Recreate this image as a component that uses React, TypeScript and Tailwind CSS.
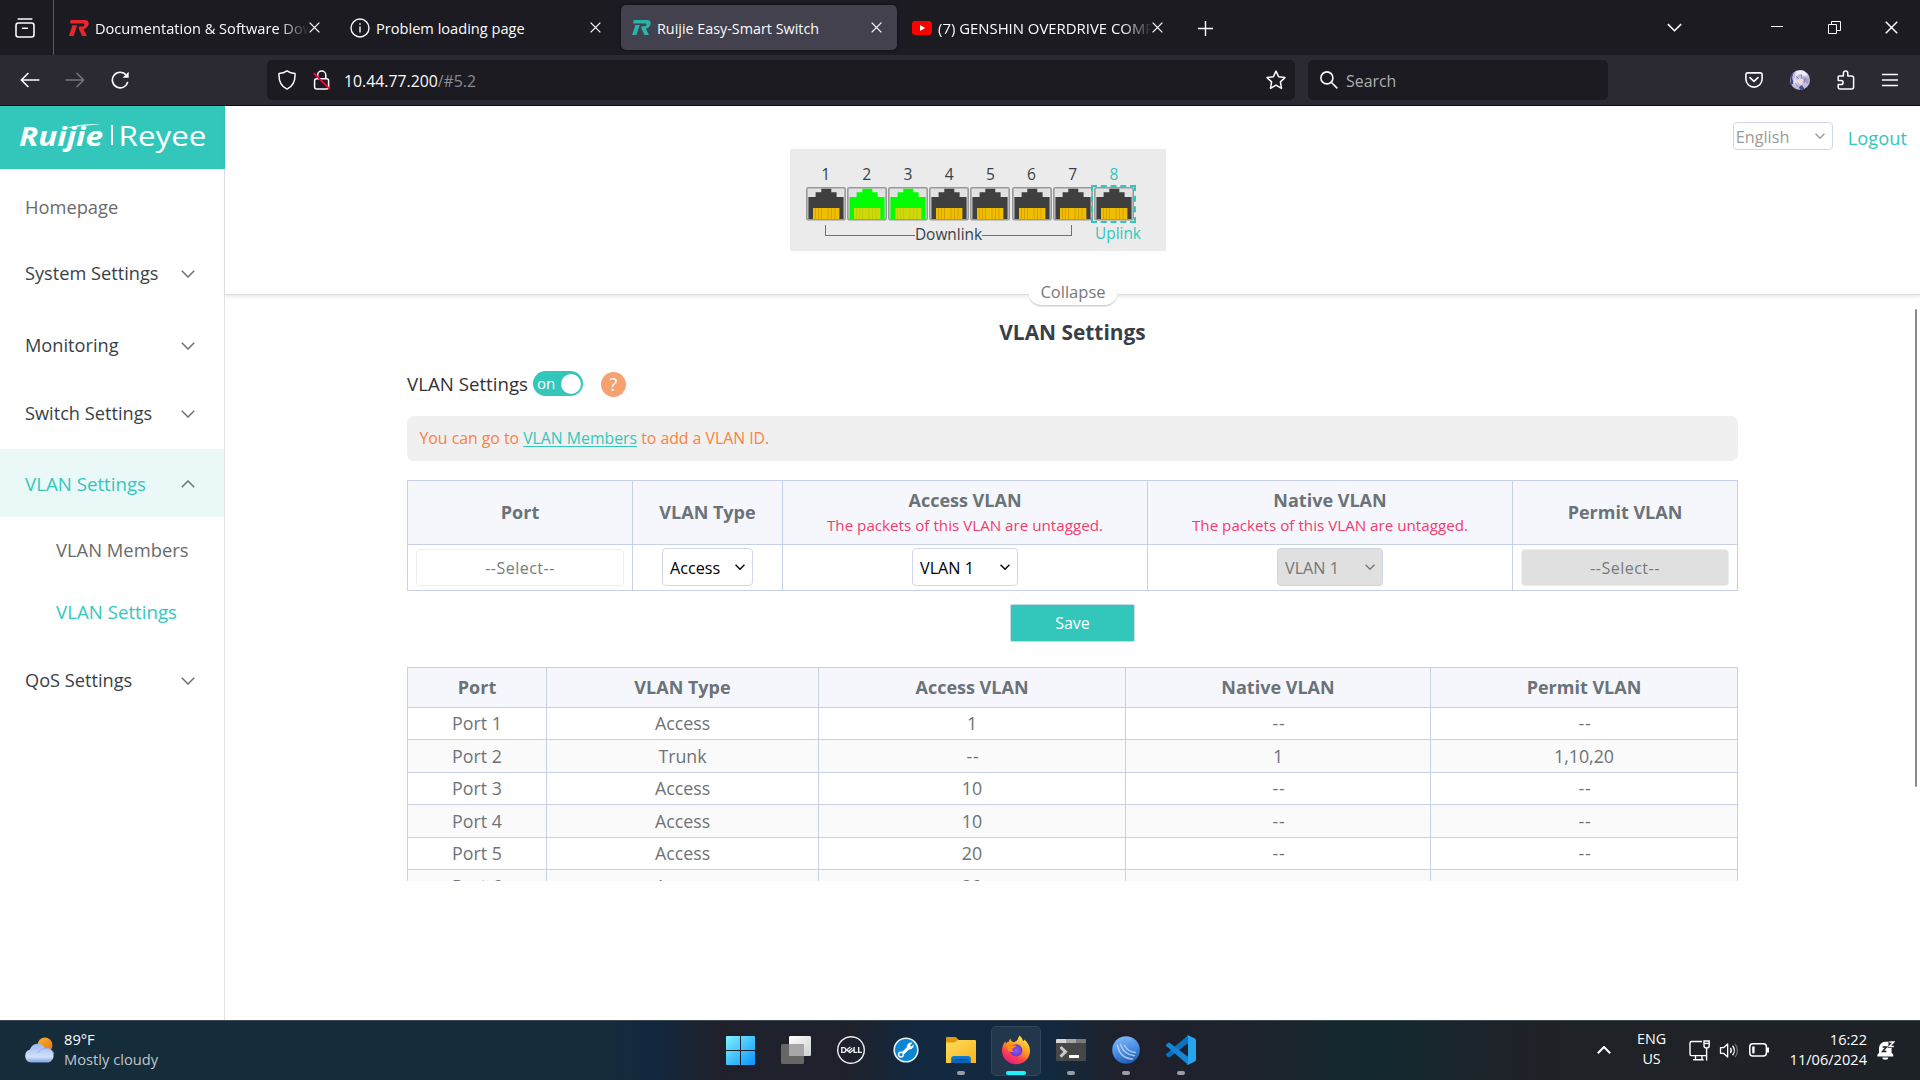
import React from "react";
import { SiDell } from "react-icons/si";

type P = { className?: string; children?: React.ReactNode };

const Chevron = ({ className = "" }: P) => (
  <svg viewBox="0 0 14 8" className={className} fill="none" stroke="currentColor" strokeWidth="1.5">
    <path d="M0.8 0.8 7 7 13.2 0.8" />
  </svg>
);

const Cross = ({ className = "" }: P) => (
  <svg viewBox="0 0 12 12" className={className} fill="none" stroke="currentColor" strokeWidth="1.4">
    <path d="M0.7 0.7 11.3 11.3M11.3 0.7 0.7 11.3" />
  </svg>
);

const BrandMark = ({ className = "" }: P) => (
  <svg viewBox="0 0 20 16" className={className} fill="currentColor">
    <path d="M1.6 0H16.2C19.2 0 20.4 2.2 19.4 5 18.6 7.2 16.8 8.6 14.6 9.2L18 16H13.2L9.6 8.4 10.2 6.6H13.4C15.4 6.6 16.2 3.6 14 3.6H1z" />
    <path d="M3.4 5.2H8.2L4.6 16H0z" />
  </svg>
);

const Youtube = () => (
  <svg viewBox="0 0 20 14" className="h-[14px] w-[20px]">
    <rect width="20" height="14" rx="3.2" fill="#f00" />
    <path d="M8 4.1 13.2 7 8 9.9z" fill="#fff" />
  </svg>
);

const InfoCircle = () => (
  <svg viewBox="0 0 20 20" className="size-5" fill="none" stroke="#fbfbfe" strokeWidth="1.4">
    <circle cx="10" cy="10" r="9" />
    <path d="M10 8.4V14.6M10 5.2V6.8" />
  </svg>
);

function Tab({ icon, title, active, fade }: { icon: React.ReactNode; title: string; active?: boolean; fade?: boolean }) {
  return (
    <div className={`flex h-[45px] w-[276px] items-center rounded-[5px] pl-[10px] pr-[15px] ${active ? "bg-[#42414d] shadow-[0_0_3px_rgba(0,0,0,0.6)]" : ""}`}>
      <span className="flex w-[20px] shrink-0 justify-center">{icon}</span>
      <span
        className={`ml-[6px] mt-[2px] flex-1 overflow-hidden whitespace-nowrap ${
          title.startsWith("(7)") ? "text-[14.9px]" : title.startsWith("Ruijie") ? "text-[14.35px]" : "text-[14.6px]"
        } ${fade ? "[mask-image:linear-gradient(to_left,transparent,black_30px)]" : ""}`}
      >
        {title}
      </span>
      <Cross className="size-[11px] shrink-0" />
    </div>
  );
}

function TabBar() {
  return (
    <div className="flex h-[55px] shrink-0 bg-[#1c1b22] text-[#fbfbfe]">
      <div className="flex w-[54px] items-center justify-center border-r border-[#5b5a62] pr-[4px] pt-px">
        <svg viewBox="0 0 20 20" className="size-[20px]" fill="none" stroke="currentColor" strokeWidth="1.6">
          <path d="M3.2 1H16.8" strokeLinecap="round" />
          <rect x="1" y="5" width="18" height="14" rx="2.4" />
          <path d="M7.6 10.2H12.4" strokeLinecap="round" />
        </svg>
      </div>
      <div className="ml-[5px] flex items-center gap-[5px]">
        <Tab icon={<BrandMark className="h-[16px] w-[20px] text-[#e5262c]" />} title="Documentation & Software Download" fade />
        <Tab icon={<InfoCircle />} title="Problem loading page" />
        <Tab icon={<BrandMark className="h-[15px] w-[19px] text-[#2bb3a9]" />} title="Ruijie Easy-Smart Switch" active />
        <Tab icon={<Youtube />} title="(7) GENSHIN OVERDRIVE COMP" fade />
      </div>
      <div className="ml-[20px] flex items-center pt-px">
        <svg viewBox="0 0 16 16" className="size-[15px]" stroke="currentColor" strokeWidth="1.5">
          <path d="M8 0V16M0 8H16" />
        </svg>
      </div>
      <div className="ml-auto flex items-center">
        <Chevron className="mr-[89px] h-[9px] w-[15px]" />
        <span className="mb-[2px] mr-[45px] h-px w-[12px] bg-white" />
        <svg viewBox="0 0 13 13" className="mr-[44px] size-[13px]" fill="none" stroke="currentColor">
          <path d="M0.5 3.5H8.5V12.5H0.5zM3.5 3V0.5H12.5V9.5H9" />
        </svg>
        <Cross className="mr-[22px] size-[13px]" />
      </div>
    </div>
  );
}

function NavBar() {
  return (
    <div className="flex h-[51px] shrink-0 items-center border-b border-[#0c0c0d] bg-[#2b2a33] text-[#fbfbfe]">
      <svg viewBox="0 0 20 16" className="ml-[20px] h-[16px] w-[20px]" fill="none" stroke="currentColor" strokeWidth="1.6">
        <path d="M19.4 8H1.4M8.4 1 1.4 8 8.4 15" />
      </svg>
      <svg viewBox="0 0 20 16" className="ml-[25px] mr-px h-[16px] w-[20px] text-[#76757c]" fill="none" stroke="currentColor" strokeWidth="1.6">
        <path d="M0.6 8H18.6M11.6 1 18.6 8 11.6 15" />
      </svg>
      <svg viewBox="0 0 20 20" className="ml-[25px] size-[19px]" fill="none" stroke="currentColor" strokeWidth="1.7">
        <path d="M17.6 11.5A8.2 8.2 0 1 1 16 4.4" />
        <path d="M18.6 0.8V7.2H12.2z" fill="currentColor" stroke="none" />
      </svg>
      <div className="ml-[137px] flex h-[40px] w-[1028px] items-center rounded-[5px] bg-[#1c1b22]">
        <svg viewBox="0 0 18 20" className="ml-[11px] h-[20px] w-[18px]" fill="none" stroke="currentColor" strokeWidth="1.5" strokeLinejoin="round">
          <path d="M9 0.9C6.8 2.5 4 3.4 1 3.6 0.6 10.6 2.8 16.2 9 19.1 15.2 16.2 17.4 10.6 17 3.6 14 3.4 11.2 2.5 9 0.9z" />
        </svg>
        <svg viewBox="0 0 18 20" className="ml-[17px] h-[20px] w-[18px]" fill="none" stroke="currentColor" strokeWidth="1.5">
          <path d="M4.6 8.6V5.2A4.1 4.1 0 0 1 12.8 5.2V8.6" />
          <rect x="1.6" y="8.8" width="14" height="10.2" rx="2" />
          <path d="M0.8 3.2 16.8 19.2" stroke="#ff0039" strokeWidth="1.8" />
        </svg>
        <span className="ml-[13px] mt-[3px] text-[15.8px]">
          10.44.77.200<span className="text-[#8c8b92]">/#5.2</span>
        </span>
        <svg viewBox="0 0 20 20" className="ml-auto mr-[9px] size-[20px]" fill="none" stroke="currentColor" strokeWidth="1.5" strokeLinejoin="round">
          <path d="M10 1.2 12.7 6.8 18.9 7.6 14.4 11.9 15.5 18.4 10 15.2 4.5 18.4 5.6 11.9 1.1 7.6 7.3 6.8z" />
        </svg>
      </div>
      <div className="ml-[13px] flex h-[40px] w-[300px] items-center rounded-[5px] bg-[#1c1b22]">
        <svg viewBox="0 0 18 18" className="ml-[12px] size-[18px]" fill="none" stroke="currentColor" strokeWidth="1.6">
          <circle cx="6.9" cy="6.9" r="6" />
          <path d="M11.2 11.2 17.4 17.4" />
        </svg>
        <span className="ml-[8px] mt-[4px] text-[15.9px] text-[#aeadb3]">Search</span>
      </div>
      <div className="ml-auto mr-[22px] flex items-center gap-[27px]">
        <svg viewBox="0 0 18 16" className="h-[16px] w-[18px]" fill="none" stroke="currentColor" strokeWidth="1.6">
          <path d="M2.6 0.9H15.4A1.7 1.7 0 0 1 17.1 2.6V7A8.1 8.1 0 0 1 0.9 7V2.6A1.7 1.7 0 0 1 2.6 0.9z" />
          <path d="M5 5.6 9 9.4 13 5.6" strokeLinecap="round" />
        </svg>
        <svg viewBox="0 0 20 20" className="size-[20px]">
          <defs>
            <clipPath id="avatar"><circle cx="10" cy="10" r="10" /></clipPath>
          </defs>
          <g clipPath="url(#avatar)">
            <rect width="20" height="20" fill="#c4bcdc" />
            <path d="M0 4 4 1 2 8 4 13 1 15z" fill="#3a4590" />
            <path d="M6 1 13 0 18 5 14 6 9 4 5 8z" fill="#efecf8" />
            <path d="M8 8 13 9 12 15 8 13z" fill="#f2d9dc" />
            <path d="M13 7 19 9 18 14 15 12z" fill="#a59cc8" />
            <path d="M9 17 12 15 15 20H10z" fill="#4a4d86" />
            <path d="M4 8 8 10 6 16 3 13z" fill="#e4dff2" />
            <path d="M6 6 9 9M11 4 12 9M15 8 14 13M5 13 8 17" stroke="#8078a8" strokeWidth="0.8" />
          </g>
        </svg>
        <svg viewBox="0 0 18 20" className="h-[20px] w-[18px]" fill="none" stroke="currentColor" strokeWidth="1.5" strokeLinejoin="round">
          <path d="M2.2 6H6.4V3.2A2.2 2.2 0 0 1 10.8 3.2V6H14.6A2 2 0 0 1 16.6 8V17A2 2 0 0 1 14.6 19H3.2A2 2 0 0 1 1.2 17V14.6H4A2.1 2.1 0 0 0 4 10.4H1.2V7A1 1 0 0 1 2.2 6z" />
        </svg>
        <svg viewBox="0 0 16 14" className="h-[14px] w-[16px]" stroke="currentColor" strokeWidth="1.5">
          <path d="M0 1.5H16M0 7H16M0 12.5H16" />
        </svg>
      </div>
    </div>
  );
}

function NavItem({ label, box, active, open }: { label: string; box: string; active?: boolean; open?: boolean }) {
  return (
    <div className={`flex items-center justify-between pl-[25px] pr-[29px] ${box} ${active ? "bg-[#eaf8f7] text-[#33c7bc]" : "text-[#383f47]"}`}>
      <span className={`whitespace-nowrap ${label === "VLAN Settings" ? "text-[18.7px]" : "text-[18.2px]"}`}>{label}</span>
      <Chevron className={`h-[8px] w-[14px] text-[#6b7075] ${open ? "rotate-180" : ""}`} />
    </div>
  );
}

function Sidebar() {
  return (
    <div className="flex w-[225px] shrink-0 flex-col">
      <div className="h-[63px] bg-[#33c7bc]">
        <svg viewBox="0 0 225 63" className="h-[63px] w-[225px]" fill="#fff" fontFamily="'Open Sans', sans-serif">
          <text x="19" y="39.5" fontSize="27" fontWeight="700" fontStyle="italic" textLength="84" lengthAdjust="spacingAndGlyphs">Ruijie</text>
          <path d="M66 22.5C76 18.5 88 17.8 101 18.6 90 19 78 20.4 66 22.5z" />
          <rect x="111" y="19" width="2" height="20" />
          <text x="118.5" y="40" fontSize="28" textLength="88" lengthAdjust="spacingAndGlyphs">Reyee</text>
        </svg>
      </div>
      <div className="flex flex-1 flex-col border-r border-[#e1e3e6]">
        <div className="flex h-[72px] items-center pl-[25px] pt-[4px] text-[18.3px] text-[#6b6b6b]">Homepage</div>
        <NavItem label="System Settings" box="h-[67px] pb-[2px]" />
        <NavItem label="Monitoring" box="h-[72px] pt-[4px]" />
        <NavItem label="Switch Settings" box="h-[69px] pb-[2px]" />
        <NavItem label="VLAN Settings" box="h-[68px] pt-[2px]" active open />
        <div className="flex h-[66px] items-center pl-[56px] text-[18.4px] text-[#6b6b6b]">VLAN Members</div>
        <div className="flex h-[61px] items-center pb-[2px] pl-[56px] text-[18.7px] text-[#33c7bc]">VLAN Settings</div>
        <NavItem label="QoS Settings" box="h-[74px]" />
      </div>
    </div>
  );
}

function Port({ n, up, uplink }: { n: number; up: boolean; uplink: boolean }) {
  return (
    <div className="flex w-[41.2px] flex-col items-center">
      <span className={`h-[22px] text-[15.6px] leading-[22px] ${uplink ? "text-[#33c7bc]" : "text-[#383f47]"}`}>{n}</span>
      <div className={`flex h-[38px] items-center justify-center ${uplink ? "w-[45px] outline-2 -outline-offset-2 outline-dashed outline-[#33c7bc]" : "w-[41px]"}`}>
        <svg viewBox="0 0 40 34" className="h-[34px] w-[40px]">
          <rect x="0.8" y="0.8" width="38.4" height="32" rx="1.5" fill="#e2e2e2" stroke="#9a9a9a" strokeWidth="1.6" />
          <path d="M15.3 1.8H25.3V5.2H30.6V10H37.6V32H2.4V10H9.6V5.2H15.3z" fill={up ? "#00ff00" : "#3f3f3f"} />
          <rect x="7" y="21" width="26.4" height="11" fill={up ? "#d3d60a" : "#f0be00"} />
          <path d="M9.5 21V32M12.5 21V32M15.5 21V32M22 21V32M25.5 21V32M29 21V32" stroke={up ? "#a8d800" : "#d39c00"} strokeWidth="0.9" />
        </svg>
      </div>
    </div>
  );
}

function Header() {
  return (
    <div className="relative flex h-[189px] shrink-0 border-b border-[#dcdde0] shadow-[0_2px_3px_rgba(0,0,0,0.08)]">
      <div className="ml-[565px] mt-[43px] h-[102px] w-[376px] bg-[#ebebeb] pl-[15px] pt-[14px]">
        <div className="flex">
          {[1, 2, 3, 4, 5, 6, 7, 8].map((n) => (
            <Port key={n} n={n} up={n === 2 || n === 3} uplink={n === 8} />
          ))}
        </div>
        <div className="flex pt-px">
          <div className="ml-[20px] flex w-[247px] items-center">
            <span className="mb-[9px] mt-px h-[11px] flex-1 border-b border-l border-[#6d7277]" />
            <span className="h-[20px] text-[15.4px] leading-[20px] text-[#383f47]">Downlink</span>
            <span className="mb-[9px] mt-px h-[11px] flex-1 border-b border-r border-[#6d7277]" />
          </div>
          <span className="ml-[23px] h-[20px] text-[15.4px] leading-[20px] text-[#33c7bc]">Uplink</span>
        </div>
      </div>
      <div className="ml-auto mr-[13px] mt-[16px] flex h-[28px] items-center">
        <div className="flex h-[28px] w-[100px] items-center justify-between rounded-[4px] border border-[#ced6e8] pl-[2px] pr-[7px] text-[16.2px] text-[#9a9a9a]">
          <span className="pt-[2px]">English</span>
          <Chevron className="h-[6px] w-[10px] stroke-2" />
        </div>
        <span className="ml-[15px] mt-[4px] text-[18.3px] text-[#33c7bc]">Logout</span>
      </div>
      <div className="absolute left-[803px] top-[172px] flex h-[28px] w-[90px] items-center justify-center rounded-b-[14px] border-b border-[#cfd1d4] bg-white pt-[2px] text-[16.5px] text-[#75797e] shadow-[0_1px_1px_rgba(0,0,0,0.1)]">
        Collapse
      </div>
    </div>
  );
}

function Select({ value, box, disabled }: { value: string; box: string; disabled?: boolean }) {
  return (
    <div className={`mb-px flex h-[38px] items-center justify-between rounded-[4px] border border-[#ced6e8] pl-[7px] pr-[7px] text-[16.2px] ${box} ${disabled ? "bg-[#e0e0e0] text-[#757575]" : "bg-white text-black"}`}>
      <span className="pt-[2px]">{value}</span>
      <Chevron className="h-[6px] w-[10px] stroke-2" />
    </div>
  );
}

const Cell = ({ className = "", children }: P) => (
  <div className={`flex items-center justify-center border-b border-r border-[#c7d0e6] ${className}`}>{children}</div>
);

const HEAD = "bg-[#f5f7fc] text-[18px] font-bold text-[#6b7278]";

function Untagged({ title }: { title: string }) {
  return (
    <Cell className={`${HEAD} flex-col`}>
      <span className="mt-px leading-[25px]">{title}</span>
      <span className="text-[15.2px] font-normal leading-[25px] text-[#f03c6e]">The packets of this VLAN are untagged.</span>
    </Cell>
  );
}

const ROWS: string[][] = [
  ["Port 1", "Access", "1", "--", "--"],
  ["Port 2", "Trunk", "--", "1", "1,10,20"],
  ["Port 3", "Access", "10", "--", "--"],
  ["Port 4", "Access", "10", "--", "--"],
  ["Port 5", "Access", "20", "--", "--"],
  ["Port 6", "Access", "20", "--", "--"],
];

function Content() {
  return (
    <div className="flex flex-1 justify-between">
      <div className="ml-[182px] w-[1331px]">
        <h1 className="flex h-[75px] items-center justify-center text-[20.9px] font-bold text-[#383f47]">VLAN Settings</h1>
        <div className="flex h-[28px] items-center">
          <span className="w-[126px] whitespace-nowrap text-[18.7px] text-[#333]">VLAN Settings</span>
          <div className="mb-px flex h-[25px] w-[50px] items-center justify-between rounded-full bg-[#33c7bc] pl-[4px] pr-[2px] text-[15px] text-white">
            <span className="leading-none">on</span>
            <span className="size-[20px] rounded-full bg-white" />
          </div>
          <div className="ml-[18px] mt-px flex size-[25px] items-center justify-center rounded-full bg-[#f7a070] text-[18px] text-white">?</div>
        </div>
        <div className="mt-[18px] flex h-[45px] items-center rounded-[7px] bg-[#f0f0f0] pl-[12.5px] text-[15.8px] text-[#fa8240]">
          <span className="pt-px">
            You can go to <span className="text-[#33c7bc] underline underline-offset-[2px]">VLAN Members</span> to add a VLAN ID.
          </span>
        </div>
        <div className="mt-[19px] grid grid-cols-[225px_150px_365px_365px_225px] grid-rows-[64px_46px] border-l border-t border-[#c7d0e6]">
          <Cell className={HEAD}>Port</Cell>
          <Cell className={HEAD}>VLAN Type</Cell>
          <Untagged title="Access VLAN" />
          <Untagged title="Native VLAN" />
          <Cell className={HEAD}>Permit VLAN</Cell>
          <Cell>
            <div className="flex h-[37px] w-[208px] items-center justify-center rounded-[4px] border border-[#ebedf5] text-[16px] tracking-[0.5px] text-[#757a80]">--Select--</div>
          </Cell>
          <Cell><Select value="Access" box="w-[91px]" /></Cell>
          <Cell><Select value="VLAN 1" box="w-[106px]" /></Cell>
          <Cell><Select value="VLAN 1" box="w-[106px]" disabled /></Cell>
          <Cell>
            <div className="flex h-[37px] w-[208px] items-center justify-center rounded-[4px] border border-[#ebedf5] bg-[#e0e0e0] text-[16px] tracking-[0.5px] text-[#757a80]">--Select--</div>
          </Cell>
        </div>
        <div className="mt-[13px] flex justify-center">
          <div className="flex h-[38px] w-[125px] items-center justify-center rounded-[2px] border border-[#c5dbe6] bg-[#33c7bc] text-[16px] text-white">Save</div>
        </div>
        <div className="mt-[25px] h-[214px] overflow-hidden">
          <div className="grid grid-cols-[139px_272px_307px_305px_307px] grid-rows-[40px_32px_33px_32px_33px_32px_33px] border-l border-t border-[#c7d0e6]">
            {["Port", "VLAN Type", "Access VLAN", "Native VLAN", "Permit VLAN"].map((h) => (
              <Cell key={h} className={HEAD}>{h}</Cell>
            ))}
            {ROWS.map((row, r) =>
              row.map((v, c) => (
                <Cell key={`${r}-${c}`} className={`text-[17.8px] text-[#6e7378] ${r % 2 ? "bg-[#fafafa]" : "bg-white"} ${v === "--" ? "pl-[2px] tracking-[0.8px]" : ""}`}>
                  {v}
                </Cell>
              )),
            )}
          </div>
        </div>
      </div>
      <div className="mr-[3px] mt-[14px] h-[478px] w-[2.5px] rounded-full bg-[#8a8a8a]" />
    </div>
  );
}

const Weather = () => (
  <svg viewBox="0 0 31 26" className="h-[26px] w-[31px]">
    <defs>
      <linearGradient id="sun" x1="0" y1="0" x2="1" y2="1"><stop stopColor="#f7b52c" /><stop offset="1" stopColor="#ef6c12" /></linearGradient>
      <linearGradient id="cloud" x1="0" y1="0" x2="0" y2="1"><stop stopColor="#9db9f2" /><stop offset="0.7" stopColor="#d3e0fa" /><stop offset="1" stopColor="#7ea0e0" /></linearGradient>
    </defs>
    <circle cx="21" cy="8" r="7.5" fill="url(#sun)" />
    <path d="M7 25.5A6.6 6.6 0 0 1 6 12.6 8 8 0 0 1 21 11.6 7 7 0 0 1 24 25.5z" fill="url(#cloud)" />
    <path d="M14 16A8 8 0 0 1 21 11.6 7 7 0 0 1 29.8 17" fill="none" stroke="#8fb0ee" strokeWidth="1" />
  </svg>
);

const WindowsLogo = () => (
  <svg viewBox="0 0 29 29" className="size-[29px]">
    <defs>
      <linearGradient id="win" x1="0" y1="0" x2="1" y2="1"><stop stopColor="#7df3ff" /><stop offset="1" stopColor="#0a93fb" /></linearGradient>
    </defs>
    <path d="M1 0H14V14H0V1A1 1 0 0 1 1 0zM15 0H28A1 1 0 0 1 29 1V14H15zM0 15H14V29H1A1 1 0 0 1 0 28zM15 15H29V28A1 1 0 0 1 28 29H15z" fill="url(#win)" />
  </svg>
);

const TaskView = () => (
  <svg viewBox="0 0 30 28" className="h-[28px] w-[30px]">
    <defs>
      <linearGradient id="tv" x1="0" y1="0" x2="1" y2="1"><stop stopColor="#fff" /><stop offset="1" stopColor="#cfcfcf" /></linearGradient>
    </defs>
    <rect x="0" y="8" width="23" height="20" rx="1.2" fill="#666" />
    <rect x="8" y="0" width="22" height="20" rx="1.2" fill="url(#tv)" />
    <path d="M8 8H23V20H8z" fill="#a6a6a6" />
  </svg>
);

const Wrench = () => (
  <svg viewBox="0 0 26 26" className="size-[26px]">
    <circle cx="13" cy="13" r="11.8" fill="#0c86d2" stroke="#e8f1f8" strokeWidth="1.6" />
    <path d="M8.2 17.8 17.5 8.8" stroke="#fff" strokeWidth="3" />
    <circle cx="8" cy="17.6" r="2.4" fill="#0c86d2" stroke="#fff" strokeWidth="1.5" />
    <path d="M19.5 5.8 16.6 8.7 17.6 10 20.8 7.4A4.4 4.4 0 0 1 14 11.6 4.4 4.4 0 0 1 19.5 5.8z" fill="#fff" />
  </svg>
);

const Folder = () => (
  <svg viewBox="0 0 30 26" className="h-[26px] w-[30px]">
    <defs>
      <linearGradient id="fold" x1="0" y1="0" x2="1" y2="1"><stop stopColor="#ffdc5e" /><stop offset="1" stopColor="#f8b41c" /></linearGradient>
      <linearGradient id="fold2" x1="0" y1="0" x2="0" y2="1"><stop stopColor="#0f7fd8" /><stop offset="1" stopColor="#0a5fb0" /></linearGradient>
    </defs>
    <path d="M1 0H9.5L13 3V8H0V1A1 1 0 0 1 1 0z" fill="#e09a0c" />
    <path d="M0 5.5H8.5L12 3H29A1 1 0 0 1 30 4V26H0z" fill="url(#fold)" />
    <path d="M5.2 26V21.5A2.5 2.5 0 0 1 7.7 19H22.3A2.5 2.5 0 0 1 24.8 21.5V26z" fill="url(#fold2)" />
    <path d="M9 22.8H21.5" stroke="#0a4a90" strokeWidth="1" />
  </svg>
);

const Firefox = () => (
  <svg viewBox="0 0 30 30" className="size-[30px]">
    <defs>
      <linearGradient id="ff" x1="0.8" y1="0.05" x2="0.25" y2="1"><stop stopColor="#ffe94a" /><stop offset="0.4" stopColor="#ff9a1f" /><stop offset="0.7" stopColor="#ff4050" /><stop offset="1" stopColor="#e2168c" /></linearGradient>
      <radialGradient id="ffp"><stop stopColor="#8a5bf5" /><stop offset="1" stopColor="#6a38c8" /></radialGradient>
    </defs>
    <path d="M18.4 0.6C20.4 2 21.6 4 22 6.2 23 5.8 23.4 5.4 23.4 4.6 27 8 29.2 12 29 16.2 28.6 23.8 22.6 29.2 15 29.2 7.4 29.2 1.2 23.4 1 16 1 12 2.2 8.6 4.4 6.2 4.4 7.2 4.6 7.8 5 8.4 6 7.4 7 6.8 8 6.6 8.2 5.4 8.4 4.6 9.4 3.6 9.6 5.4 10.6 6.6 12.4 7.2 14.6 6.6 15.8 5.8 16.6 4.4 17.2 3.2 17.6 2 18.4 0.6z" fill="url(#ff)" />
    <circle cx="15.2" cy="15.4" r="6.2" fill="url(#ffp)" />
    <path d="M4.2 9C6.8 8.2 9.4 8.6 11.4 10.4L15.2 10.6C15 12.2 13.4 12.8 11.6 13.2 11 14.2 11.4 16 13 17 10.4 17.4 7.6 16.6 6.4 14.2 5.6 12.6 5 11 4.2 9z" fill="#ff8a1c" />
  </svg>
);

const Terminal = () => (
  <svg viewBox="0 0 30 22" className="h-[22px] w-[30px]">
    <rect width="30" height="22" rx="1.2" fill="#474747" />
    <path d="M1 0H10V4H0V1A1 1 0 0 1 1 0z" fill="#d8d8d8" />
    <path d="M10 0H20V4H10z" fill="#a5a5a5" />
    <path d="M20 0H29A1 1 0 0 1 30 1V4H20z" fill="#7a7a7a" />
    <path d="M4.5 8 9.5 12.8 4.5 17.6" fill="none" stroke="#c9c9c9" strokeWidth="3" />
    <path d="M13 17.5H23" stroke="#fff" strokeWidth="3" />
  </svg>
);

const Globe = () => (
  <svg viewBox="0 0 28 28" className="size-[28px]">
    <defs>
      <linearGradient id="globe" x1="0.3" y1="0" x2="0.6" y2="1"><stop stopColor="#7db8f8" /><stop offset="0.5" stopColor="#4a8fe6" /><stop offset="1" stopColor="#1a5cae" /></linearGradient>
    </defs>
    <circle cx="14" cy="14" r="13.8" fill="url(#globe)" />
    <path d="M5.5 9.5C7 17 12 22.5 20.5 23M8.5 8.5C10.5 14.5 14.5 19 22.5 19.8M12.5 9.5C14.5 13.5 18 16 23.5 16.5" fill="none" stroke="#d0def0" strokeWidth="1.5" strokeLinecap="round" opacity="0.75" />
  </svg>
);

const VSCode = () => (
  <svg viewBox="0 0 30 30" className="size-[30px]">
    <path d="M22 0.3V8.2L3.6 22.2A1.3 1.3 0 0 1 2 22.1L0.5 20.7A1.3 1.3 0 0 1 0.5 18.8z" fill="#0a72c0" />
    <path d="M22 29.7V21.8L3.6 7.8A1.3 1.3 0 0 0 2 7.9L0.5 9.3A1.3 1.3 0 0 0 0.5 11.2z" fill="#1484d4" />
    <path d="M22 0.2 28.9 3.5A2 2 0 0 1 30 5.3V24.7A2 2 0 0 1 28.9 26.5L22 29.8C21.4 30 20.6 29.8 20 29.2 21 30 22 29.2 22 28.2V1.8C22 0.8 21 0 20 0.8 20.6 0.2 21.4 0 22 0.2z" fill="#27a3f0" />
  </svg>
);

function Taskbar() {
  const apps: { el: React.ReactNode; run?: boolean; active?: boolean }[] = [
    { el: <WindowsLogo /> },
    { el: <TaskView /> },
    { el: <SiDell className="size-[28px] text-[#eef0f2]" /> },
    { el: <Wrench /> },
    { el: <Folder />, run: true },
    { el: <Firefox />, run: true, active: true },
    { el: <Terminal />, run: true },
    { el: <Globe />, run: true },
    { el: <VSCode />, run: true },
  ];
  return (
    <div className="flex h-[60px] shrink-0 items-center border-t border-[#3c4a52] bg-[linear-gradient(90deg,#152c3a_0px,#152c3a_600px,#13283f_650px,#1f202b_720px,#1e212c_850px,#13293f_920px,#13293f_1050px,#1f202b_1120px,#1c222b_1250px,#12282f_1370px,#1f2126_1540px,#1d2226_1920px)] text-white">
      <div className="flex w-[713px] items-center pb-px pl-[24px]">
        <Weather />
        <div className="mb-[3px] ml-[9px] flex flex-col text-[14.7px] leading-[20px]">
          <span>89°F</span>
          <span className="text-[#bfc6ca]">Mostly cloudy</span>
        </div>
      </div>
      <div className="flex">
        {apps.map((a, i) => (
          <div key={i} className="flex w-[55px] justify-center">
            <div className={`relative flex h-[50px] w-[50px] items-center justify-center rounded-[5px] border pb-px ${a.active ? "border-[#32465a] bg-[#22374b]" : "border-transparent"}`}>
              {a.el}
              {a.run && <span className={`absolute bottom-0 h-[4px] rounded-full ${a.active ? "w-[20px] bg-[#22f0ff]" : "w-[8px] bg-[#9a9ea4]"}`} />}
            </div>
          </div>
        ))}
      </div>
      <div className="ml-auto mr-[25px] flex items-center pb-px">
        <Chevron className="h-[8px] w-[14px] rotate-180 stroke-2" />
        <div className="mb-[2px] ml-[26px] w-[30px] text-center text-[14.3px] leading-[20px]">ENG<br />US</div>
        <svg viewBox="0 0 21 21" className="ml-[22px] size-[21px]" fill="none" stroke="currentColor" strokeWidth="1.4">
          <path d="M13 1.5H2.5A1.6 1.6 0 0 0 1 3V14A1.6 1.6 0 0 0 2.5 15.6H17.6M6.5 16V19.5M13 16V19.5M4 19.8H14.6M17.6 8V20.4" />
          <path d="M15 1H20.2V5.4A2.4 2.4 0 0 1 15 5.4z" />
          <path d="M15 3.4H20" />
        </svg>
        <svg viewBox="0 0 20 18" className="ml-[9px] h-[17px] w-[20px]" fill="none" stroke="currentColor" strokeWidth="1.4" strokeLinejoin="round">
          <path d="M1 6V12H4.2L8.6 16V2L4.2 6z" />
          <path d="M11.4 6.2A4.6 4.6 0 0 1 11.4 11.8M13.8 4A8 8 0 0 1 13.8 14" />
          <path d="M16.4 2A11 11 0 0 1 16.4 16" opacity="0.35" />
        </svg>
        <svg viewBox="0 0 21 14" className="ml-[10px] h-[14px] w-[21px]" fill="none" stroke="currentColor" strokeWidth="1.5">
          <rect x="0.8" y="0.8" width="16.6" height="12.2" rx="3" />
          <path d="M19 4.5V9.5" strokeWidth="2" />
          <rect x="3.2" y="3.2" width="2.4" height="7.4" rx="1" fill="currentColor" stroke="none" />
        </svg>
        <div className="mb-[2px] ml-[20px] text-right text-[14.6px] leading-[20px]">16:22<br />11/06/2024</div>
        <svg viewBox="0 0 18 19" className="ml-[10px] h-[19px] w-[18px]" fill="currentColor">
          <path d="M0.4 15.4V13.6L2 12V7A6.4 6.4 0 0 1 8 0.8H11.5V3.8L10.5 7H14.6V12L16.2 13.6V15.4z" />
          <path d="M5.4 16.6H11.2A2.9 2.2 0 0 1 5.4 16.6z" />
          <path d="M5.6 6H9.4L5.6 10.4H9.4" fill="none" stroke="#1d2226" strokeWidth="1.5" />
          <path d="M12.4 1H16.8L12.4 5.6H16.8" fill="none" stroke="currentColor" strokeWidth="1.5" />
        </svg>
      </div>
    </div>
  );
}

export default function App() {
  return (
    <div className="flex h-[1080px] w-[1920px] flex-col overflow-hidden bg-white font-['Open_Sans',sans-serif]">
      <TabBar />
      <NavBar />
      <div className="flex h-[914px] shrink-0">
        <Sidebar />
        <div className="flex flex-1 flex-col">
          <Header />
          <Content />
        </div>
      </div>
      <Taskbar />
    </div>
  );
}
